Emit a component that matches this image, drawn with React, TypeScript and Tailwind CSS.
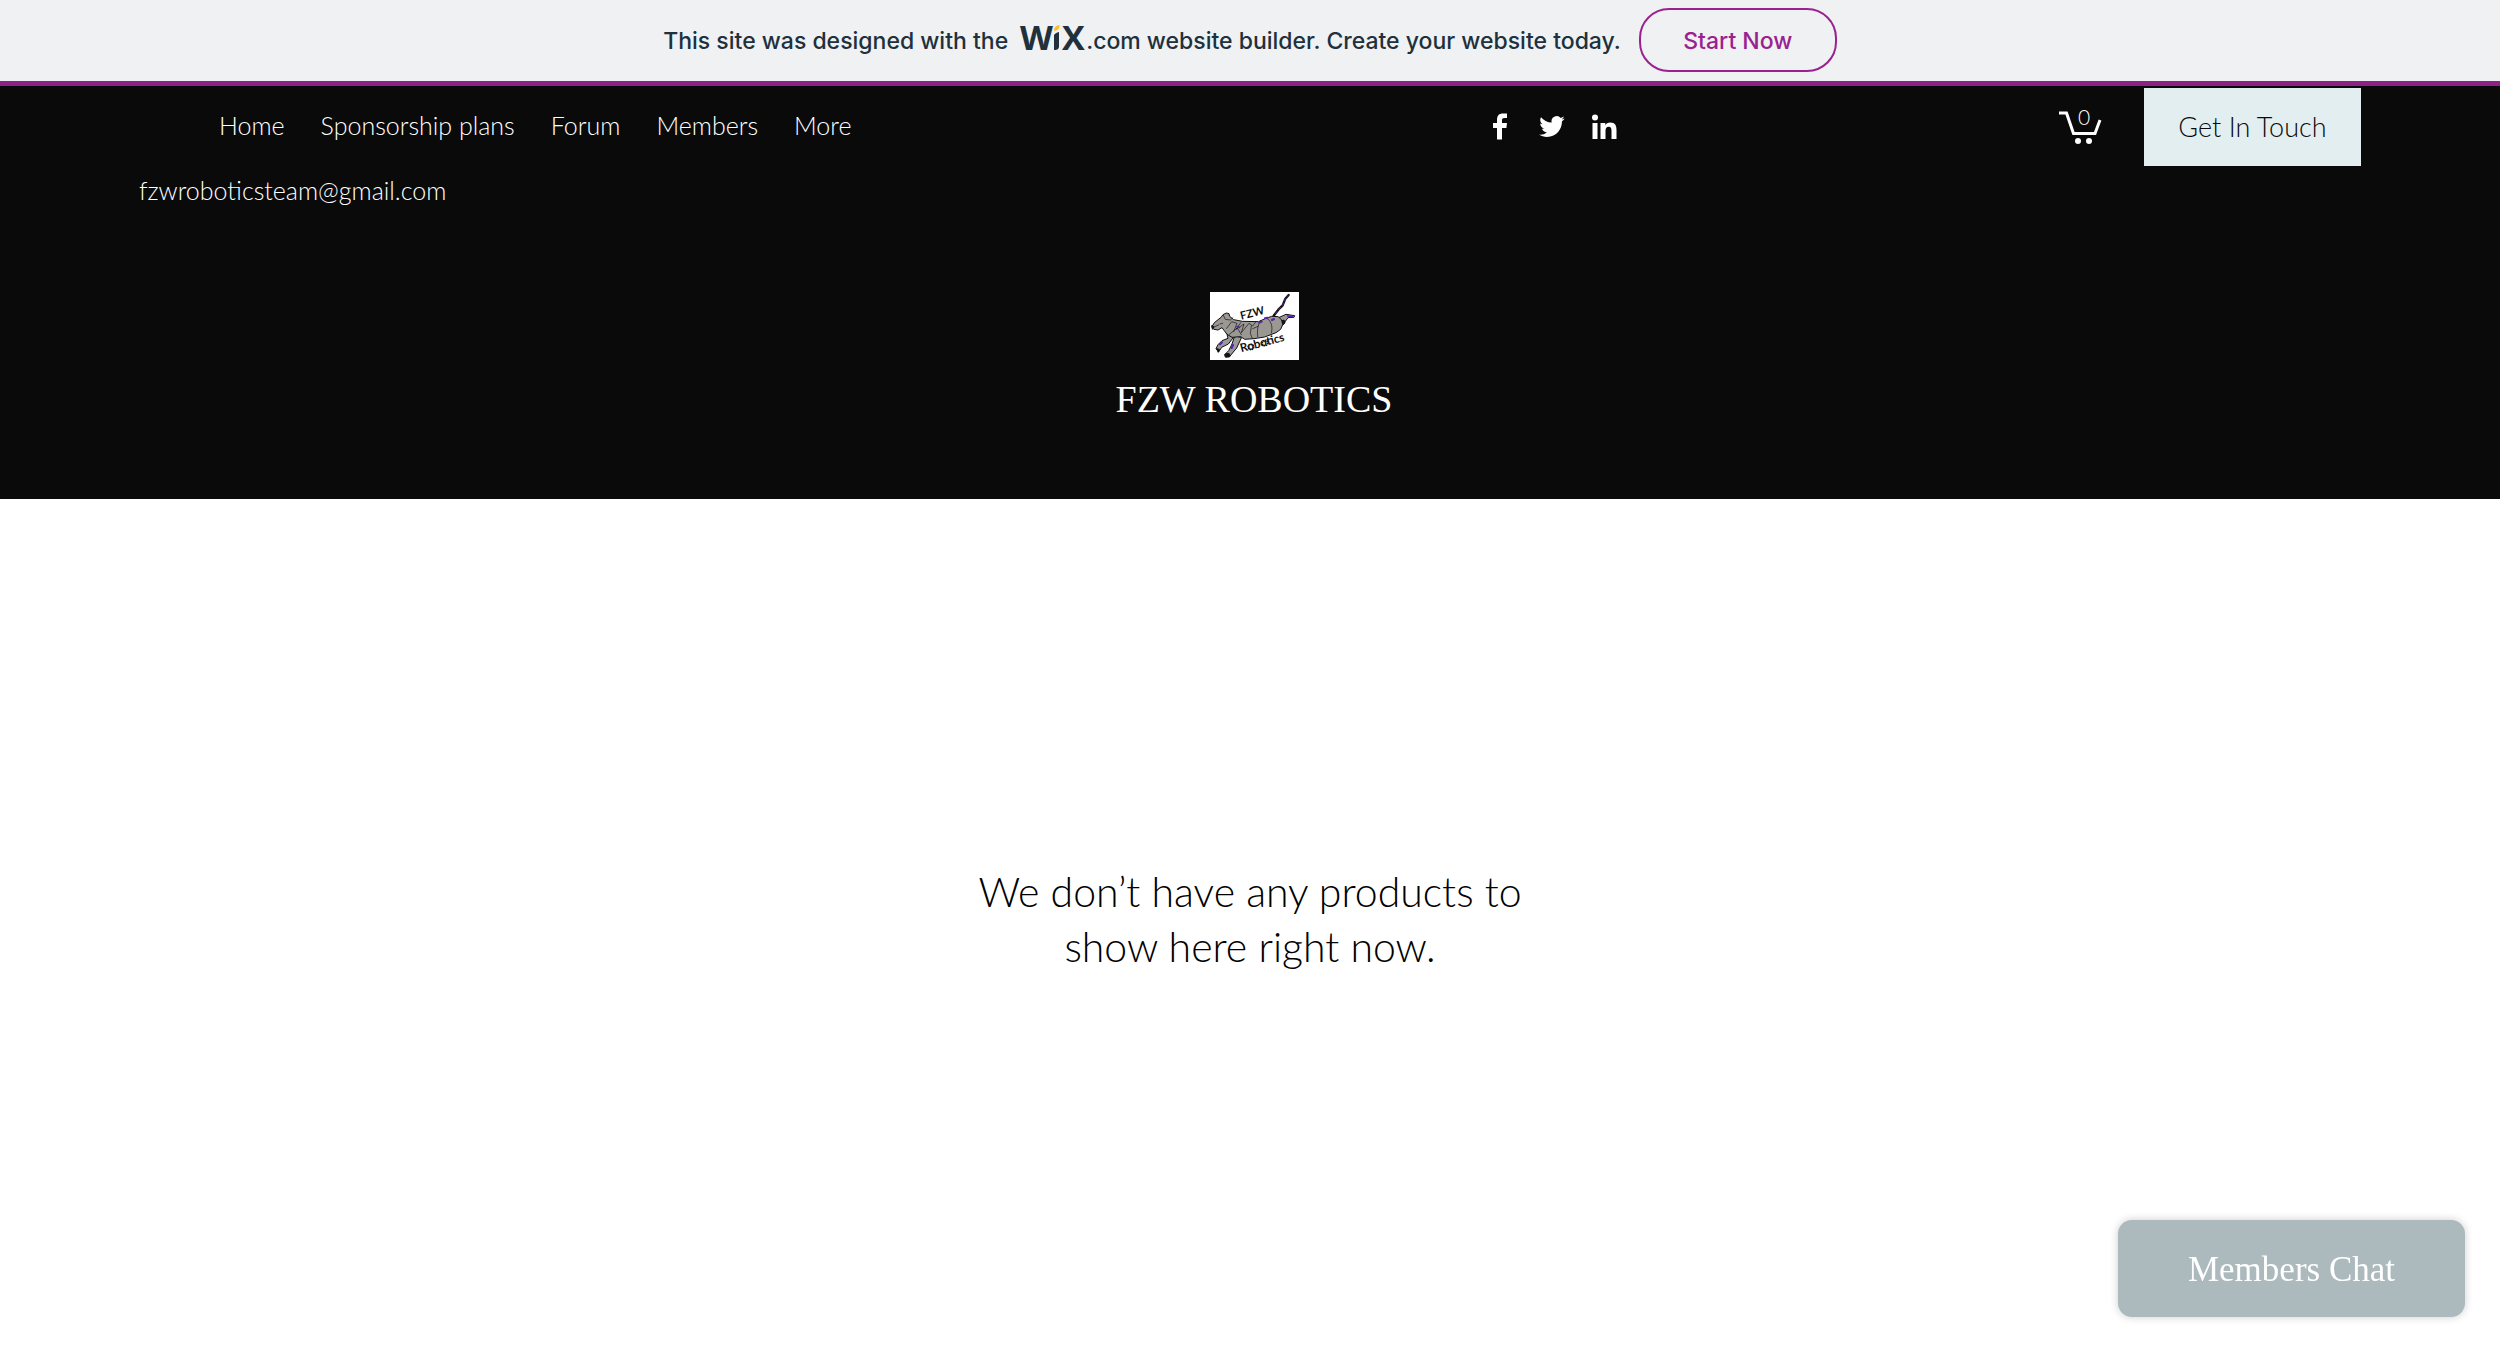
const navItems = ['Home', 'Sponsorship plans', 'Forum', 'Members', 'More']

function WixLogo() {
  return (
    <svg className="ml-[10px] h-[58px] w-[68px]" viewBox="-2 0 68 58" role="img" aria-label="Wix">
      <g fill="#20303c" fontFamily="Open Sans, sans-serif" fontSize="34" fontWeight="700">
        <text x="0" y="38">W</text>
        <text x="42" y="38">X</text>
      </g>
      <path d="M34 23c1-1.500 2.500-2.500 5-3v14c0 3-1.500 4-5 4z" fill="#20303c" />
      <path d="M34 19c0-3.500 1.500-5.500 5.500-6 0 4-1.500 5-5.500 6z" fill="#fbbd29" />
    </svg>
  )
}

function WixBanner() {
  return (
    <div className="flex h-[86px] items-center justify-center border-b-[5px] border-[#8f2287] bg-[#eff1f2] font-['Inter',sans-serif] font-medium text-[#20303c]">
      <div className="flex items-center text-[23px] leading-8">
        <span>This site was designed with the</span>
        <WixLogo />
        <span>.com website builder. Create your website today.</span>
      </div>
      <button className="mb-0.5 ml-[18px] h-16 w-[198px] rounded-[30px] border-2 border-[#9a2190] pt-1 text-[23px] text-[#9a2190]">
        Start Now
      </button>
    </div>
  )
}

function SocialLinks() {
  return (
    <div className="flex gap-[18px] text-white">
      <a href="#facebook" aria-label="Facebook">
        <svg className="size-8" viewBox="0 0 32 32" fill="currentColor">
          <path d="M9 28.500V17H5v-5h4V9c0-4.500 2-6.500 6-6.500h4v4.500h-2.500c-2 0-2.500.7-2.500 2.500V12h5l-.6 5H14v11.500z" />
        </svg>
      </a>
      <a href="#twitter" aria-label="Twitter">
        <svg className="size-8" viewBox="2 0 32 32" fill="currentColor">
          <path d="M28.700 7.600c-.9.400-1.900.7-3 .8 1-.6 1.900-1.600 2.300-2.800-1 .6-2.100 1-3.300 1.300a5.200 5.200 0 0 0-9 4.700c-4.300-.2-8.200-2.300-10.700-5.400-1.500 2.500-.6 5.500 1.600 7-.9 0-1.700-.3-2.400-.7 0 2.500 1.800 4.700 4.200 5.200-.8.200-1.600.2-2.400.1.700 2.100 2.600 3.600 4.900 3.600A10.500 10.500 0 0 1 3 23.600c2.300 1.500 5 2.300 8 2.300 9.700 0 15-8 15-15.600 1.100-.8 2-1.700 2.700-2.700z" />
        </svg>
      </a>
      <a href="#linkedin" aria-label="LinkedIn">
        <svg className="size-8" viewBox="0 0 32 32" fill="currentColor">
          <circle cx="7" cy="6.500" r="3" />
          <path d="M4.500 12h5v16h-5zM12.500 12h4.800v2.200c.9-1.600 2.600-2.600 4.900-2.600 5 0 6.300 3 6.300 7.700V28h-5v-8c0-2.400-.4-4.200-2.800-4.200s-3.200 1.900-3.200 4.200v8h-5z" />
        </svg>
      </a>
    </div>
  )
}

function CartButton() {
  return (
    <button aria-label="Cart with 0 items" className="mr-[42px] text-white">
      <svg className="h-[55px] w-[43px]" viewBox="0 -10 43 55" fill="none">
        <path d="M0 3h7.500l7 20.500h21.500l5-13.500" stroke="currentColor" strokeWidth="3" />
        <circle cx="19" cy="31" r="3" fill="currentColor" />
        <circle cx="30" cy="31" r="3" fill="currentColor" />
        <text x="25" y="15" textAnchor="middle" fill="currentColor" fontFamily="Lato, sans-serif" fontWeight="300" fontSize="21">
          0
        </text>
      </svg>
    </button>
  )
}

function TeamLogo() {
  return (
    <svg className="h-[68px] w-[89px]" viewBox="54 36 267 204" role="img" aria-label="FZW Robotics logo">
      <rect x="54" y="36" width="267" height="204" fill="#fff" />
      <g stroke="#111" strokeWidth="3" strokeLinejoin="round" strokeLinecap="round">
        <path d="M245 107l14-18 13-13 8-20 10-11" fill="none" strokeWidth="7" />
        <path d="M250 101l10-12 12-13 8-20 8-9" fill="none" stroke="#5a20b0" strokeDasharray="8 8" />
        {/* hind legs */}
        <path d="M262 112l20-9 26 4-2 5-18 1-13 18-18 16-18-2z" fill="#999" />
        <path d="M256 127l20-7 3 9-17 15-9-3z" fill="#24104a" />
        <path d="M287 108l14 2" stroke="#5a20b0" strokeWidth="5" />
        {/* front legs */}
        <path d="M104 158l4 17-18 7-12 12-6 12 8 10 9-14 20-10 14-18z" fill="#999" />
        <path d="M128 168l-8 24-10 20-12 12 2 7h12l12-15 10-12 14-30z" fill="#999" />
        <path d="M60 140l7-12 20-16 6-8 10-5 8 2 2 8 12 10 26 5 49 1 19-9 20-7 20 1 10 10 3 14-6 14-14 10-34 13-32 5-28 2-12-8-26 2-15-9-9-12-6-8-12 7-12-2z" fill="#9b9894" />
        <path d="M94 106l6 12 15 2 8-7M104 145l15-20 16 5-10 25M112 163l24-19 12 20M146 128l-14 20 24-16-8 26 23-28 11 8 10-13M178 137l-3 24 6 14M205 122c-8 12-10 30-8 48M223 114c15 8 20 26 15 45M182 146l16-7M66 141l14-6M84 132l8-2" fill="none" strokeWidth="2" />
        <path d="M136 140l6 2M202 128l7-3M219 115l8-2M84 193l6-6M119 204l4-9M240 120l6-3" fill="none" stroke="#5a20b0" strokeWidth="6" />
        <path d="M60 137l6 4-4 6zM75 206l7 2-3 8zM100 222l11-2 3 8-12 3z" fill="#111" />
      </g>
      <g fill="#111" fontFamily="Lato, sans-serif" fontWeight="700">
        <text transform="translate(148 119) rotate(-14)" fontSize="33">FZW</text>
        <text transform="translate(148 217) rotate(-15)" fontSize="35">Robotics</text>
      </g>
      <g fill="none" stroke="#111" strokeWidth="5" strokeDasharray="4 2">
        <circle cx="177" cy="201" r="8" />
        <circle cx="219" cy="189" r="8" />
      </g>
    </svg>
  )
}

function Header() {
  return (
    <header className="h-[413px] bg-[#0a0a0a] px-[139px] pt-0.5 font-['Lato',sans-serif] text-white">
      <div className="grid grid-cols-[17fr_11fr] items-center">
        <nav className="flex gap-9 pb-0.5 pl-20 text-[25px] font-light">
          {navItems.map((item) => (
            <a key={item} href="#" className="hover:underline">
              {item}
            </a>
          ))}
        </nav>
        <div className="flex items-center justify-between">
          <SocialLinks />
          <div className="flex items-center">
            <CartButton />
            <button className="h-[78px] w-[217px] bg-[#e3eef0] text-[27px] font-light text-[#0a0a0a]">
              Get In Touch
            </button>
          </div>
        </div>
      </div>
      <a href="mailto:fzwroboticsteam@gmail.com" className="mt-2 block w-fit text-[25px] leading-8 font-light">
        fzwroboticsteam@gmail.com
      </a>
      <div className="mt-[86px] flex flex-col items-center pl-2">
        <TeamLogo />
        <h1 className="mt-3 font-['Liberation_Serif',serif] text-[38px] leading-[54px]">FZW ROBOTICS</h1>
      </div>
    </header>
  )
}

export default function App() {
  return (
    <div className="min-h-screen bg-white">
      <WixBanner />
      <Header />
      <main className="px-8 pt-[365px]">
        <p className="mx-auto max-w-[580px] text-center font-['Lato',sans-serif] text-[41px] leading-[55px] font-light text-black">
          We don’t have any products to show here right now.
        </p>
      </main>
      <button className="fixed right-[35px] bottom-[35px] h-[97px] w-[347px] rounded-[14px] bg-[#acb9bd] pt-1 font-['Liberation_Serif',serif] text-[35px] text-white shadow-[0_0_8px_rgba(0,0,0,0.2)]">
        Members Chat
      </button>
    </div>
  )
}
